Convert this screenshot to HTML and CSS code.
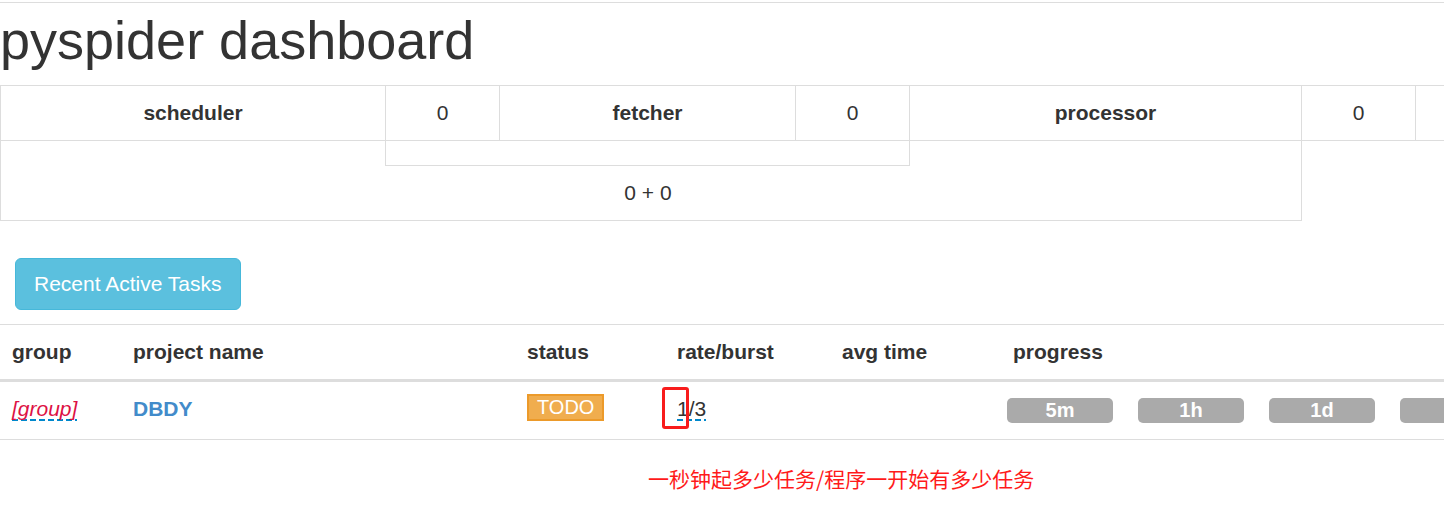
FILE: index.html
```html
<!DOCTYPE html>
<html lang="en">
<head>
<meta charset="utf-8">
<title>pyspider dashboard</title>
<link rel="stylesheet" href="styles.css">
</head>
<body>
<div class="topline"></div>
<h1 class="title">pyspider dashboard</h1>

<div class="stats">
  <div class="cell label">scheduler</div>
  <div class="cell">0</div>
  <div class="cell label">fetcher</div>
  <div class="cell">0</div>
  <div class="cell label">processor</div>
  <div class="cell">0</div>
  <div class="cell label"></div>
  <div class="sub"></div>
  <div class="total">0 + 0</div>
</div>

<div class="actions">
  <button class="btn-info" type="button">Recent Active Tasks</button>
</div>

<table class="tasks">
  <colgroup>
    <col class="w-group">
    <col class="w-name">
    <col class="w-status">
    <col class="w-rate">
    <col class="w-avg">
    <col class="w-progress">
  </colgroup>
  <thead>
    <tr>
      <th>group</th>
      <th>project name</th>
      <th>status</th>
      <th>rate/burst</th>
      <th>avg time</th>
      <th>progress</th>
    </tr>
  </thead>
  <tbody>
    <tr>
      <td><span class="editable group-name">[group]</span></td>
      <td><span class="project-name">DBDY</span></td>
      <td><span class="status-label">TODO</span></td>
      <td><span class="editable rate">1/3<span class="mark"></span></span></td>
      <td></td>
      <td class="progress-cell">
        <div class="bars">
          <div class="bar">5m</div>
          <div class="bar">1h</div>
          <div class="bar">1d</div>
          <div class="bar"></div>
        </div>
      </td>
    </tr>
  </tbody>
</table>

<div class="note">一秒钟起多少任务/程序一开始有多少任务</div>
</body>
</html>
```

FILE: styles.css
```css
html, body {
  margin: 0;
  padding: 0;
  overflow: hidden;
  background: #fff;
}

body {
  font-family: "Liberation Sans", Arial, sans-serif;
  font-size: 21px;
  line-height: 30px;
  color: #333;
  width: 1444px;
}

.topline {
  margin-top: 2px;
  border-top: 1px solid #ddd;
}

.title {
  font-size: 54px;
  font-weight: 400;
  line-height: 59px;
  margin: 8px 0 15px 0;
  color: #333;
}

/* stats grid */
.stats {
  display: grid;
  grid-template-columns: 385px 114px 296px 114px 392px 114px 400px;
  grid-template-rows: 56px 25px 55px;
  width: max-content;
}

.cell {
  box-sizing: border-box;
  border-top: 1px solid #ddd;
  border-bottom: 1px solid #ddd;
  border-left: 1px solid #ddd;
  display: flex;
  align-items: center;
  justify-content: center;
  grid-row: 1;
}

.cell.label {
  font-weight: 700;
}

.sub {
  grid-row: 2;
  grid-column: 2 / 5;
  margin-right: -1px;
  border-left: 1px solid #ddd;
  border-right: 1px solid #ddd;
  border-bottom: 1px solid #ddd;
}

.total {
  grid-row: 2 / 4;
  grid-column: 1 / 6;
  margin-right: -1px;
  border-left: 1px solid #ddd;
  border-right: 1px solid #ddd;
  border-bottom: 1px solid #ddd;
  display: flex;
  align-items: flex-end;
  justify-content: center;
  padding-bottom: 12px;
  padding-right: 6px;
}

/* button */
.actions {
  padding-left: 15px;
  margin-top: 37px;
}

.btn-info {
  font-family: "Liberation Sans", Arial, sans-serif;
  font-size: 21px;
  line-height: 30px;
  color: #fff;
  background: #5bc0de;
  border: 1px solid #46b8da;
  border-radius: 6px;
  padding: 10px 18px;
  margin: 0;
  display: block;
}

/* tasks table */
.tasks {
  margin-top: 14px;
  table-layout: fixed;
  width: 1601px;
  border-collapse: collapse;
  border-spacing: 0;
}

.w-group { width: 121px; }
.w-name { width: 394px; }
.w-status { width: 150px; }
.w-rate { width: 165px; }
.w-avg { width: 171px; }
.w-progress { width: 600px; }

.tasks th {
  text-align: left;
  font-weight: 700;
  padding: 12px;
  line-height: 30px;
  border-top: 1px solid #ddd;
  border-bottom: 3px solid #ddd;
}

.tasks td {
  padding: 10px 12px 14px 12px;
  line-height: 33px;
  vertical-align: top;
  border-bottom: 1px solid #ddd;
}

.editable {
  background-image: repeating-linear-gradient(to right, #0088cc 0, #0088cc 6px, transparent 6px, transparent 9px);
  background-repeat: no-repeat;
  background-position: left bottom;
  background-size: 100% 2px;
  line-height: 24px;
  display: inline-block;
}

.group-name {
  font-style: italic;
  color: #dd1144;
}

.project-name {
  font-weight: 700;
  color: #428bca;
}

.status-label {
  display: inline-block;
  font-size: 20px;
  line-height: 23px;
  padding: 0 8px;
  margin-top: 2px;
  color: #fff;
  background: #f0ad4e;
  border: 2px solid #ec9a2a;
  vertical-align: top;
}

.rate {
  position: relative;
}

.mark {
  position: absolute;
  left: -15px;
  top: -10px;
  width: 21px;
  height: 36px;
  border: 3px solid #f81c1c;
  border-radius: 3px;
}

.tasks td.progress-cell {
  padding: 12px 12px 12px 6px;
}

.bars {
  display: flex;
  gap: 25px;
  align-items: center;
  height: 33px;
}

.bar {
  flex: 0 0 106px;
  height: 25px;
  line-height: 25px;
  border-radius: 5px;
  background: #aaaaaa;
  color: #fff;
  font-weight: 700;
  font-size: 20px;
  text-align: center;
}

.note {
  margin-top: 23px;
  margin-left: 648px;
  font-family: "Noto Sans CJK SC", "Noto Sans", sans-serif;
  font-size: 21px;
  line-height: 30px;
  color: #ff1a1a;
}
```
